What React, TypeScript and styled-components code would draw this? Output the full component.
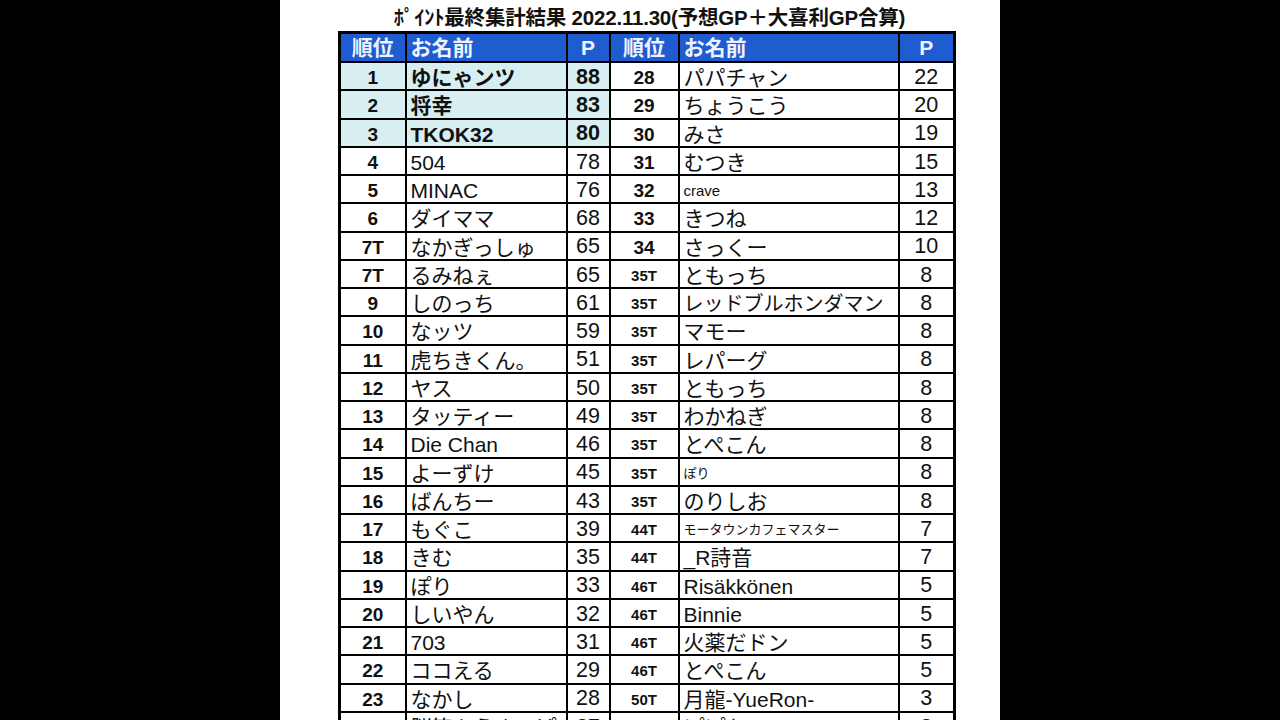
import React from "react";
import styled, { createGlobalStyle } from "styled-components";

const Global = createGlobalStyle`
  html, body { margin: 0; padding: 0; background: #000; }
  body { font-family: "Liberation Sans", "Noto Sans CJK JP", sans-serif; }
`;

const Stage = styled.div`
  width: 1280px;
  height: 720px;
  background: #000;
  display: flex;
  justify-content: center;
  overflow: hidden;
`;

const Sheet = styled.div`
  width: 720px;
  height: 720px;
  background: #fff;
  display: flex;
  flex-direction: column;
  padding-left: 58px;
  box-sizing: border-box;
  overflow: hidden;
`;

const Title = styled.div`
  flex-shrink: 0;
  height: 31px;
  width: 615px;
  display: flex;
  align-items: center;
  justify-content: center;
  padding-left: 8px;
  box-sizing: border-box;
  font-family: "Liberation Sans", "Noto Sans CJK JP", sans-serif;
  font-weight: 700;
  font-size: 20.5px;
  color: #111;
  white-space: nowrap;
  letter-spacing: -0.2px;
`;

const Table = styled.table`
  flex-shrink: 0;
  border-collapse: collapse;
  table-layout: fixed;
  width: 615px;
  border: 3px solid #000;
`;

const HeadCell = styled.th<{ $align?: string }>`
  background: #1f5ccf;
  color: #eef4ff;
  font-weight: 700;
  font-size: 21px;
  height: 27px;
  padding: 0 4px;
  border: 2px solid #000;
  text-align: ${(p) => p.$align || "center"};
  line-height: 1;
  font-family: "Liberation Sans", "Noto Sans CJK JP", sans-serif;
`;

const Cell = styled.td<{ $hl?: boolean }>`
  height: 23.25px;
  padding: 3px 0 0 0;
  border: 2px solid #000;
  background: ${(p) => (p.$hl ? "#d8eff1" : "#fff")};
  line-height: 1;
  color: #111;
  white-space: nowrap;
  overflow: hidden;
`;

const RankCell = styled(Cell)<{ $small?: boolean }>`
  text-align: center;
  font-weight: 700;
  font-size: ${(p) => (p.$small ? "15px" : "19px")};
`;

const NameCell = styled(Cell)<{ $size?: number; $bold?: boolean }>`
  text-align: left;
  padding-left: 4px;
  font-size: ${(p) => p.$size || 21}px;
  font-weight: ${(p) => (p.$bold ? 700 : 400)};
`;

const PointCell = styled(Cell)<{ $bold?: boolean }>`
  text-align: center;
  font-size: 21.5px;
  font-weight: ${(p) => (p.$bold ? 700 : 400)};
`;

type Entry = { r: string; n: string; p: number; size?: number };

const left: Entry[] = [
  { r: "1", n: "ゆにゃンツ", p: 88 },
  { r: "2", n: "将幸", p: 83 },
  { r: "3", n: "TKOK32", p: 80 },
  { r: "4", n: "504", p: 78 },
  { r: "5", n: "MINAC", p: 76 },
  { r: "6", n: "ダイママ", p: 68 },
  { r: "7T", n: "なかぎっしゅ", p: 65 },
  { r: "7T", n: "るみねぇ", p: 65 },
  { r: "9", n: "しのっち", p: 61 },
  { r: "10", n: "なッツ", p: 59 },
  { r: "11", n: "虎ちきくん。", p: 51 },
  { r: "12", n: "ヤス", p: 50 },
  { r: "13", n: "タッティー", p: 49 },
  { r: "14", n: "Die Chan", p: 46 },
  { r: "15", n: "よーずけ", p: 45 },
  { r: "16", n: "ばんちー", p: 43 },
  { r: "17", n: "もぐこ", p: 39 },
  { r: "18", n: "きむ", p: 35 },
  { r: "19", n: "ぽり", p: 33 },
  { r: "20", n: "しいやん", p: 32 },
  { r: "21", n: "703", p: 31 },
  { r: "22", n: "ココえる", p: 29 },
  { r: "23", n: "なかし", p: 28 },
  { r: "24", n: "脳筋ふうまっぱ", p: 27 },
];

const right: Entry[] = [
  { r: "28", n: "パパチャン", p: 22 },
  { r: "29", n: "ちょうこう", p: 20 },
  { r: "30", n: "みさ", p: 19 },
  { r: "31", n: "むつき", p: 15 },
  { r: "32", n: "crave", p: 13, size: 15 },
  { r: "33", n: "きつね", p: 12 },
  { r: "34", n: "さっくー", p: 10 },
  { r: "35T", n: "ともっち", p: 8 },
  { r: "35T", n: "レッドブルホンダマン", p: 8, size: 20 },
  { r: "35T", n: "マモー", p: 8 },
  { r: "35T", n: "レパーグ", p: 8 },
  { r: "35T", n: "ともっち", p: 8 },
  { r: "35T", n: "わかねぎ", p: 8 },
  { r: "35T", n: "とぺこん", p: 8 },
  { r: "35T", n: "ぽり", p: 8, size: 13 },
  { r: "35T", n: "のりしお", p: 8 },
  { r: "44T", n: "モータウンカフェマスター", p: 7, size: 13 },
  { r: "44T", n: "_R詩音", p: 7 },
  { r: "46T", n: "Risäkkönen", p: 5 },
  { r: "46T", n: "Binnie", p: 5 },
  { r: "46T", n: "火薬だドン", p: 5 },
  { r: "46T", n: "とぺこん", p: 5 },
  { r: "50T", n: "月龍-YueRon-", p: 3 },
  { r: "50T", n: "ぽぽち", p: 3 },
];

export default function App() {
  return (
    <Stage>
      <Global />
      <Sheet>
        <Title>ﾎﾟｲﾝﾄ最終集計結果 2022.11.30(予想GP＋大喜利GP合算)</Title>
        <Table>
          <colgroup>
            <col style={{ width: 66 }} />
            <col style={{ width: 161 }} />
            <col style={{ width: 43 }} />
            <col style={{ width: 69 }} />
            <col style={{ width: 220 }} />
            <col style={{ width: 56 }} />
          </colgroup>
          <thead>
            <tr>
              <HeadCell>順位</HeadCell>
              <HeadCell $align="left">お名前</HeadCell>
              <HeadCell>P</HeadCell>
              <HeadCell>順位</HeadCell>
              <HeadCell $align="left">お名前</HeadCell>
              <HeadCell>P</HeadCell>
            </tr>
          </thead>
          <tbody>
            {left.map((l, i) => {
              const r = right[i];
              const top = i < 3;
              return (
                <tr key={i}>
                  <RankCell $hl={top}>{l.r}</RankCell>
                  <NameCell $hl={top} $bold={top} $size={l.size}>
                    {l.n}
                  </NameCell>
                  <PointCell $hl={top} $bold={top}>
                    {l.p}
                  </PointCell>
                  <RankCell $small={r.r.endsWith("T")}>{r.r}</RankCell>
                  <NameCell $size={r.size}>{r.n}</NameCell>
                  <PointCell>{r.p}</PointCell>
                </tr>
              );
            })}
          </tbody>
        </Table>
      </Sheet>
    </Stage>
  );
}
